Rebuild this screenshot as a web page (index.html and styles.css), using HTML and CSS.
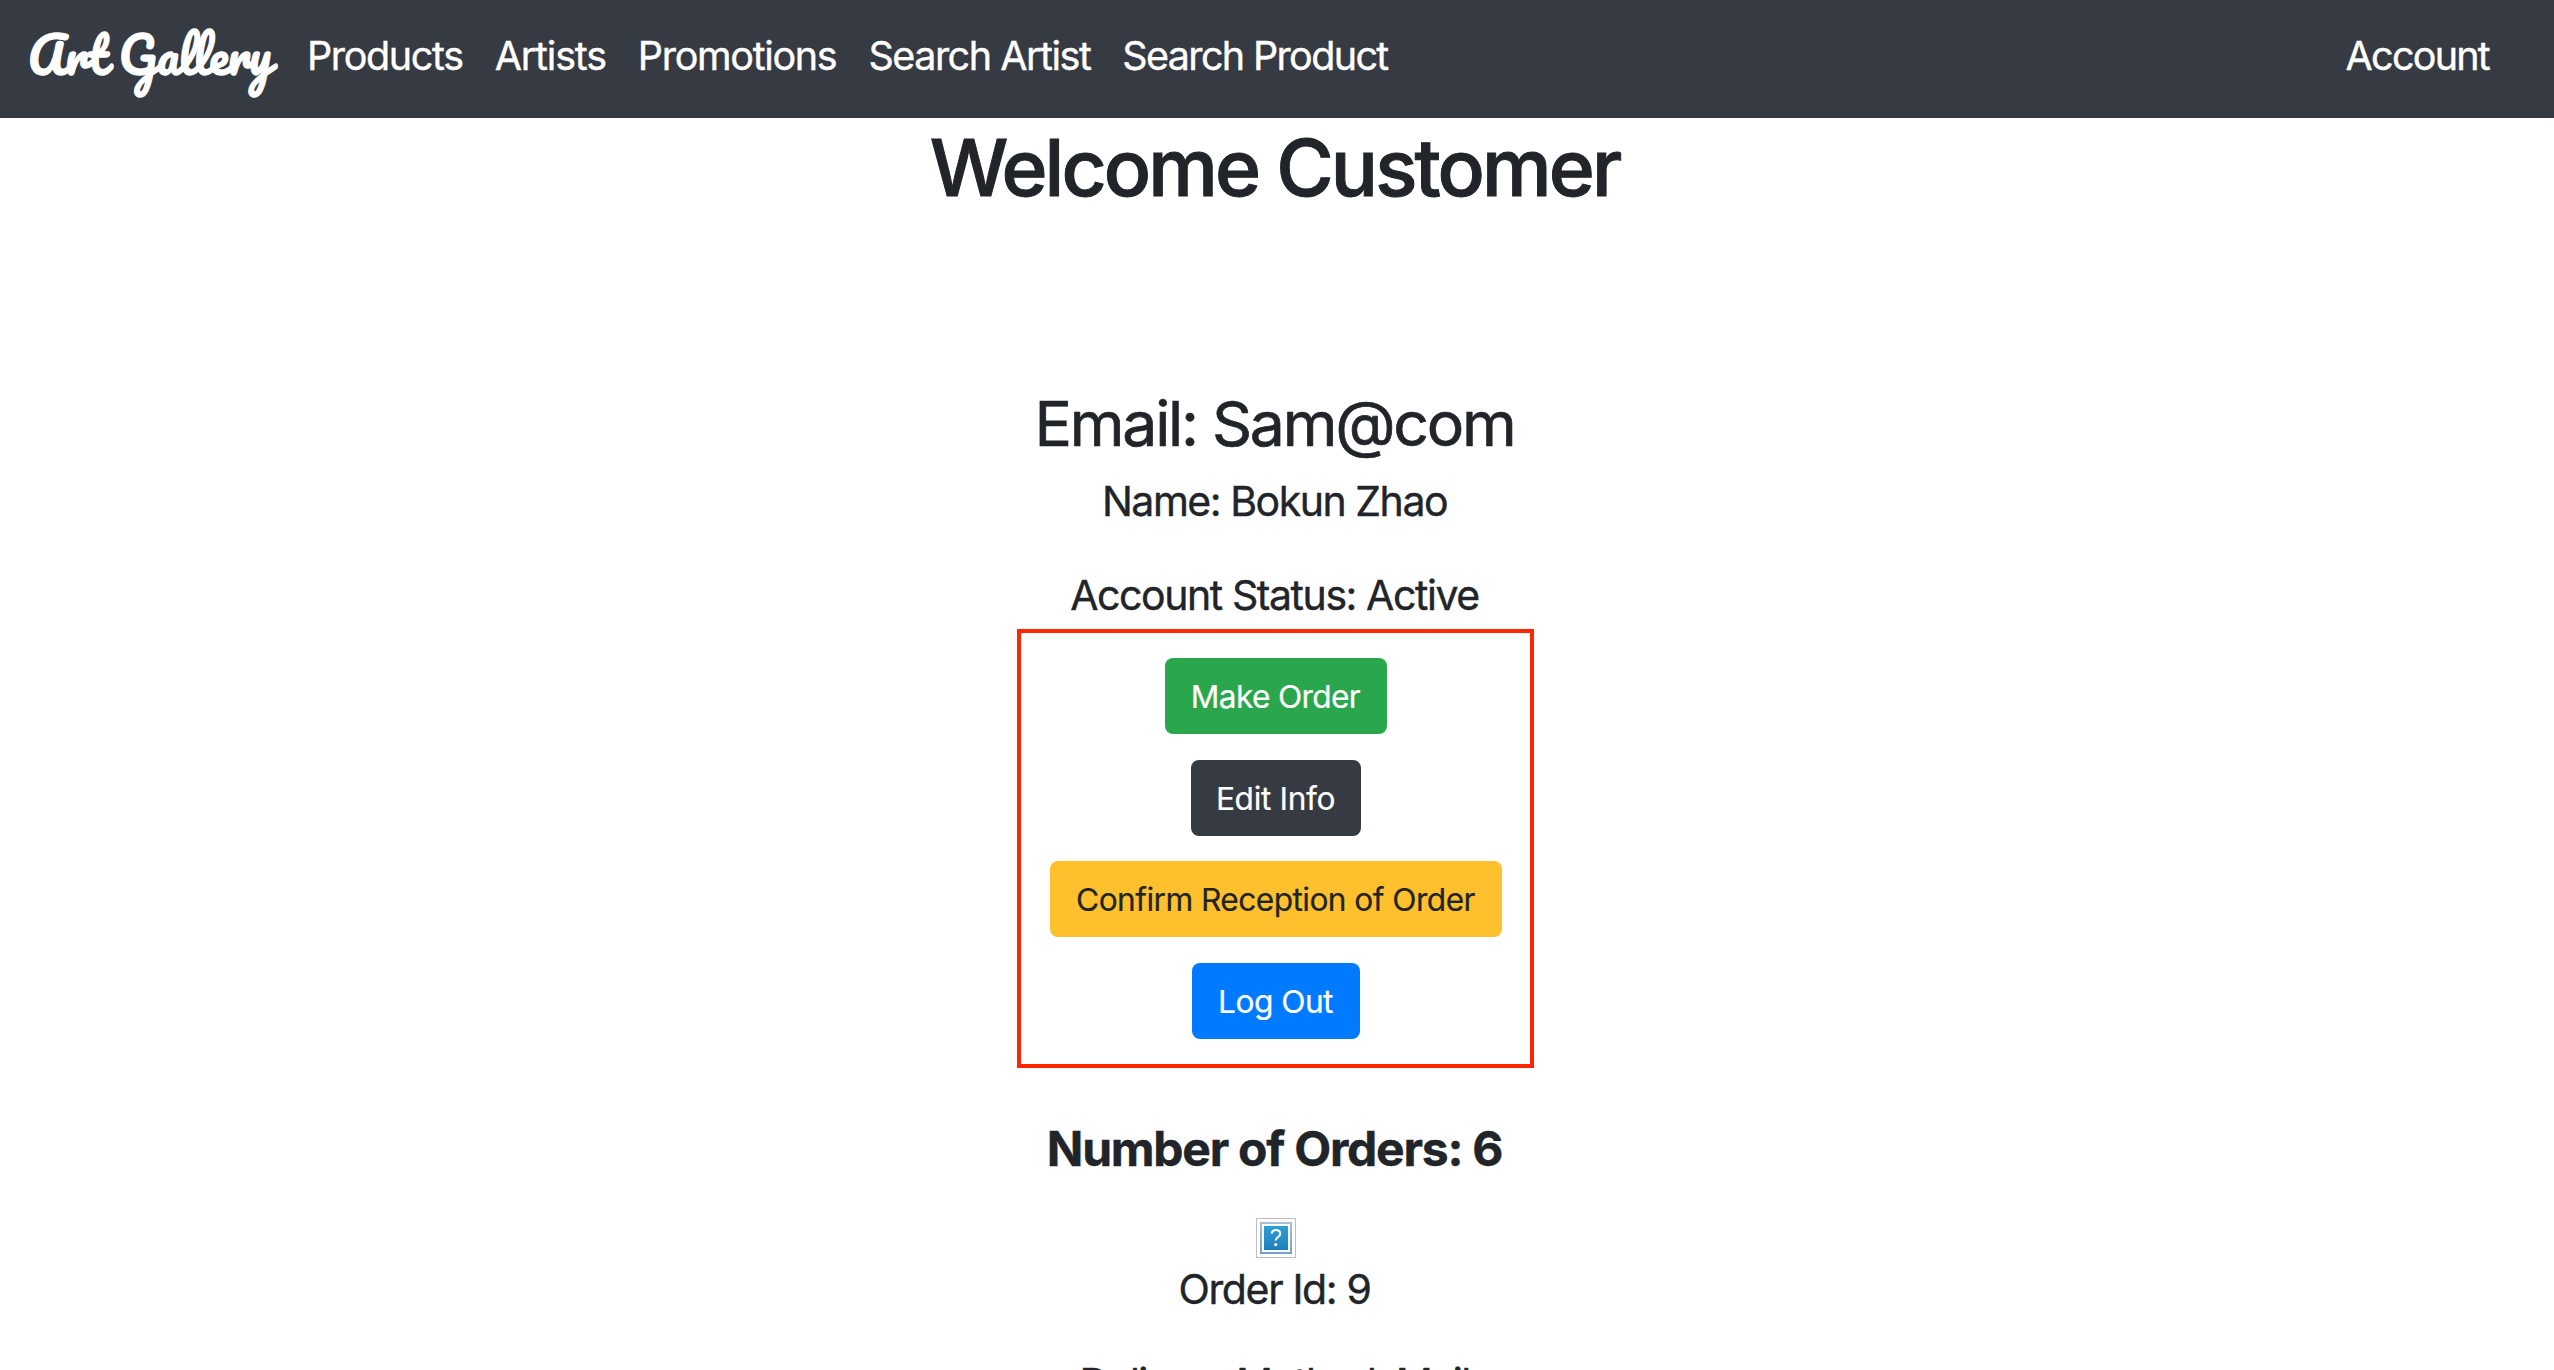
FILE: index.html
```html
<!DOCTYPE html>
<html lang="en">
<head>
<meta charset="utf-8">
<title>Art Gallery</title>
<link rel="stylesheet" href="styles.css">
</head>
<body>
<nav class="navbar">
  <a class="brand">Art Gallery</a>
  <a class="link products">Products</a>
  <a class="link artists">Artists</a>
  <a class="link promotions">Promotions</a>
  <a class="link search-artist">Search Artist</a>
  <a class="link search-product">Search Product</a>
  <a class="link account">Account</a>
</nav>
<main class="page">
  <h1 class="title">Welcome Customer</h1>
  <h2 class="email">Email: Sam@com</h2>
  <p class="line name">Name: Bokun Zhao</p>
  <p class="line status">Account Status: Active</p>
  <section class="actions">
    <button class="btn success">Make Order</button>
    <button class="btn dark">Edit Info</button>
    <button class="btn warning">Confirm Reception of Order</button>
    <button class="btn primary">Log Out</button>
  </section>
  <h3 class="count">Number of Orders: 6</h3>
  <svg class="missing" width="40" height="40" viewBox="0 0 40 40">
    <defs>
      <linearGradient id="frame" x1="0" y1="0" x2="0" y2="1"><stop offset="0" stop-color="#a6c0de"/><stop offset="1" stop-color="#789fce"/></linearGradient>
      <linearGradient id="tile" x1="0" y1="0" x2="0" y2="1"><stop offset="0" stop-color="#2e9fd5"/><stop offset="1" stop-color="#1e7fbb"/></linearGradient>
    </defs>
    <rect x=".5" y=".5" width="39" height="39" fill="#fff" stroke="#bfbfbf"/>
    <rect x="4" y="4" width="32" height="32" fill="url(#frame)"/>
    <rect x="6" y="6" width="28" height="28" fill="#fff"/>
    <rect x="8" y="8" width="24" height="24" fill="url(#tile)"/>
    <path d="M15.6 15.4c.6-2.2 2.1-3.3 4.3-3.3 2.5 0 4.3 1.4 4.3 3.7 0 3.4-4.5 3.5-4.5 6.8" fill="none" stroke="#fff" stroke-width="2"/>
    <circle cx="19.7" cy="26.6" r="1.6" fill="#fff"/>
  </svg>
  <p class="line order-id">Order Id: 9</p>
  <p class="line delivery">Delivery Method: Mail</p>
</main>
</body>
</html>
```
FILE: styles.css
```css
* { box-sizing: border-box; }

body {
  margin: 0;
  height: 1370px;
  overflow: hidden;
  background: #fff;
  color: #212529;
  font-family: Inter, "Liberation Sans", sans-serif;
  -webkit-text-stroke: .4px currentColor;
}

.navbar {
  display: flex;
  align-items: flex-start;
  gap: 32px;
  height: 118px;
  padding: 26px 65px 0 28px;
  background: #363a42;
  border-bottom: 1px solid #3a3340;
  color: #fff;
  -webkit-text-stroke-color: #fff;
}

.brand {
  width: 247px;
  font: 400 48px/57px Pacifico, Lato, cursive;
  letter-spacing: -.45px;
  white-space: nowrap;
  -webkit-text-stroke-width: 1.3px;
}

.link {
  font-size: 39.5px;
  line-height: 60px;
  white-space: nowrap;
}

.products { letter-spacing: -1.367px; }
.artists { letter-spacing: -1.186px; }
.promotions { letter-spacing: -1.325px; }
.search-artist { letter-spacing: -1.48px; }
.search-product { letter-spacing: -1.65px; }
.account { margin-left: auto; letter-spacing: -1.75px; }

.page {
  display: flex;
  flex-direction: column;
  align-items: center;
  padding: 1.5px 3px 0 0;
  -webkit-text-stroke-color: #212529;
}

.title, .email, .line, .count { margin: 0; padding-right: 2px; white-space: nowrap; }

.title {
  font-size: 78.4px;
  font-weight: 500;
  line-height: 96px;
  letter-spacing: -2.88px;
  -webkit-text-stroke-width: 1px;
}

.email {
  margin-top: 169px;
  font-size: 62.5px;
  font-weight: 400;
  line-height: 76px;
  letter-spacing: -2.25px;
  -webkit-text-stroke-width: .7px;
}

.line { font-size: 41px; line-height: 50px; }
.name { margin-top: 15.5px; letter-spacing: -1.469px; }
.status { margin-top: 44px; letter-spacing: -1.429px; }

.actions {
  display: flex;
  flex-direction: column;
  align-items: center;
  justify-content: space-between;
  width: 517px;
  height: 439px;
  margin-top: 9px;
  padding: 25px 0;
  border: 4px solid #ff2600;
}

.btn {
  height: 76px;
  padding: 1px 0 0;
  border: 0;
  border-radius: 8px;
  color: #fff;
  font: 400 31.7px/75px Inter, "Liberation Sans", sans-serif;
  -webkit-text-stroke: .2px #fff;
}

.success { width: 222px; background: #2aa74c; letter-spacing: -.666px; }
.dark { width: 170px; background: #363a42; letter-spacing: -.367px; }
.warning { width: 452px; background: #fec02d; color: #212529; letter-spacing: -.563px; -webkit-text-stroke-color: #212529; }
.primary { width: 168px; background: #007bff; letter-spacing: -.538px; }

.count {
  margin-top: 51.5px;
  font-size: 48px;
  font-weight: 700;
  line-height: 58px;
  letter-spacing: -1.25px;
}

.missing { display: block; margin-top: 40.5px; }
.order-id { margin-top: 6px; letter-spacing: -1.354px; }
.delivery { margin-top: 44px; letter-spacing: -1.5px; }
```
